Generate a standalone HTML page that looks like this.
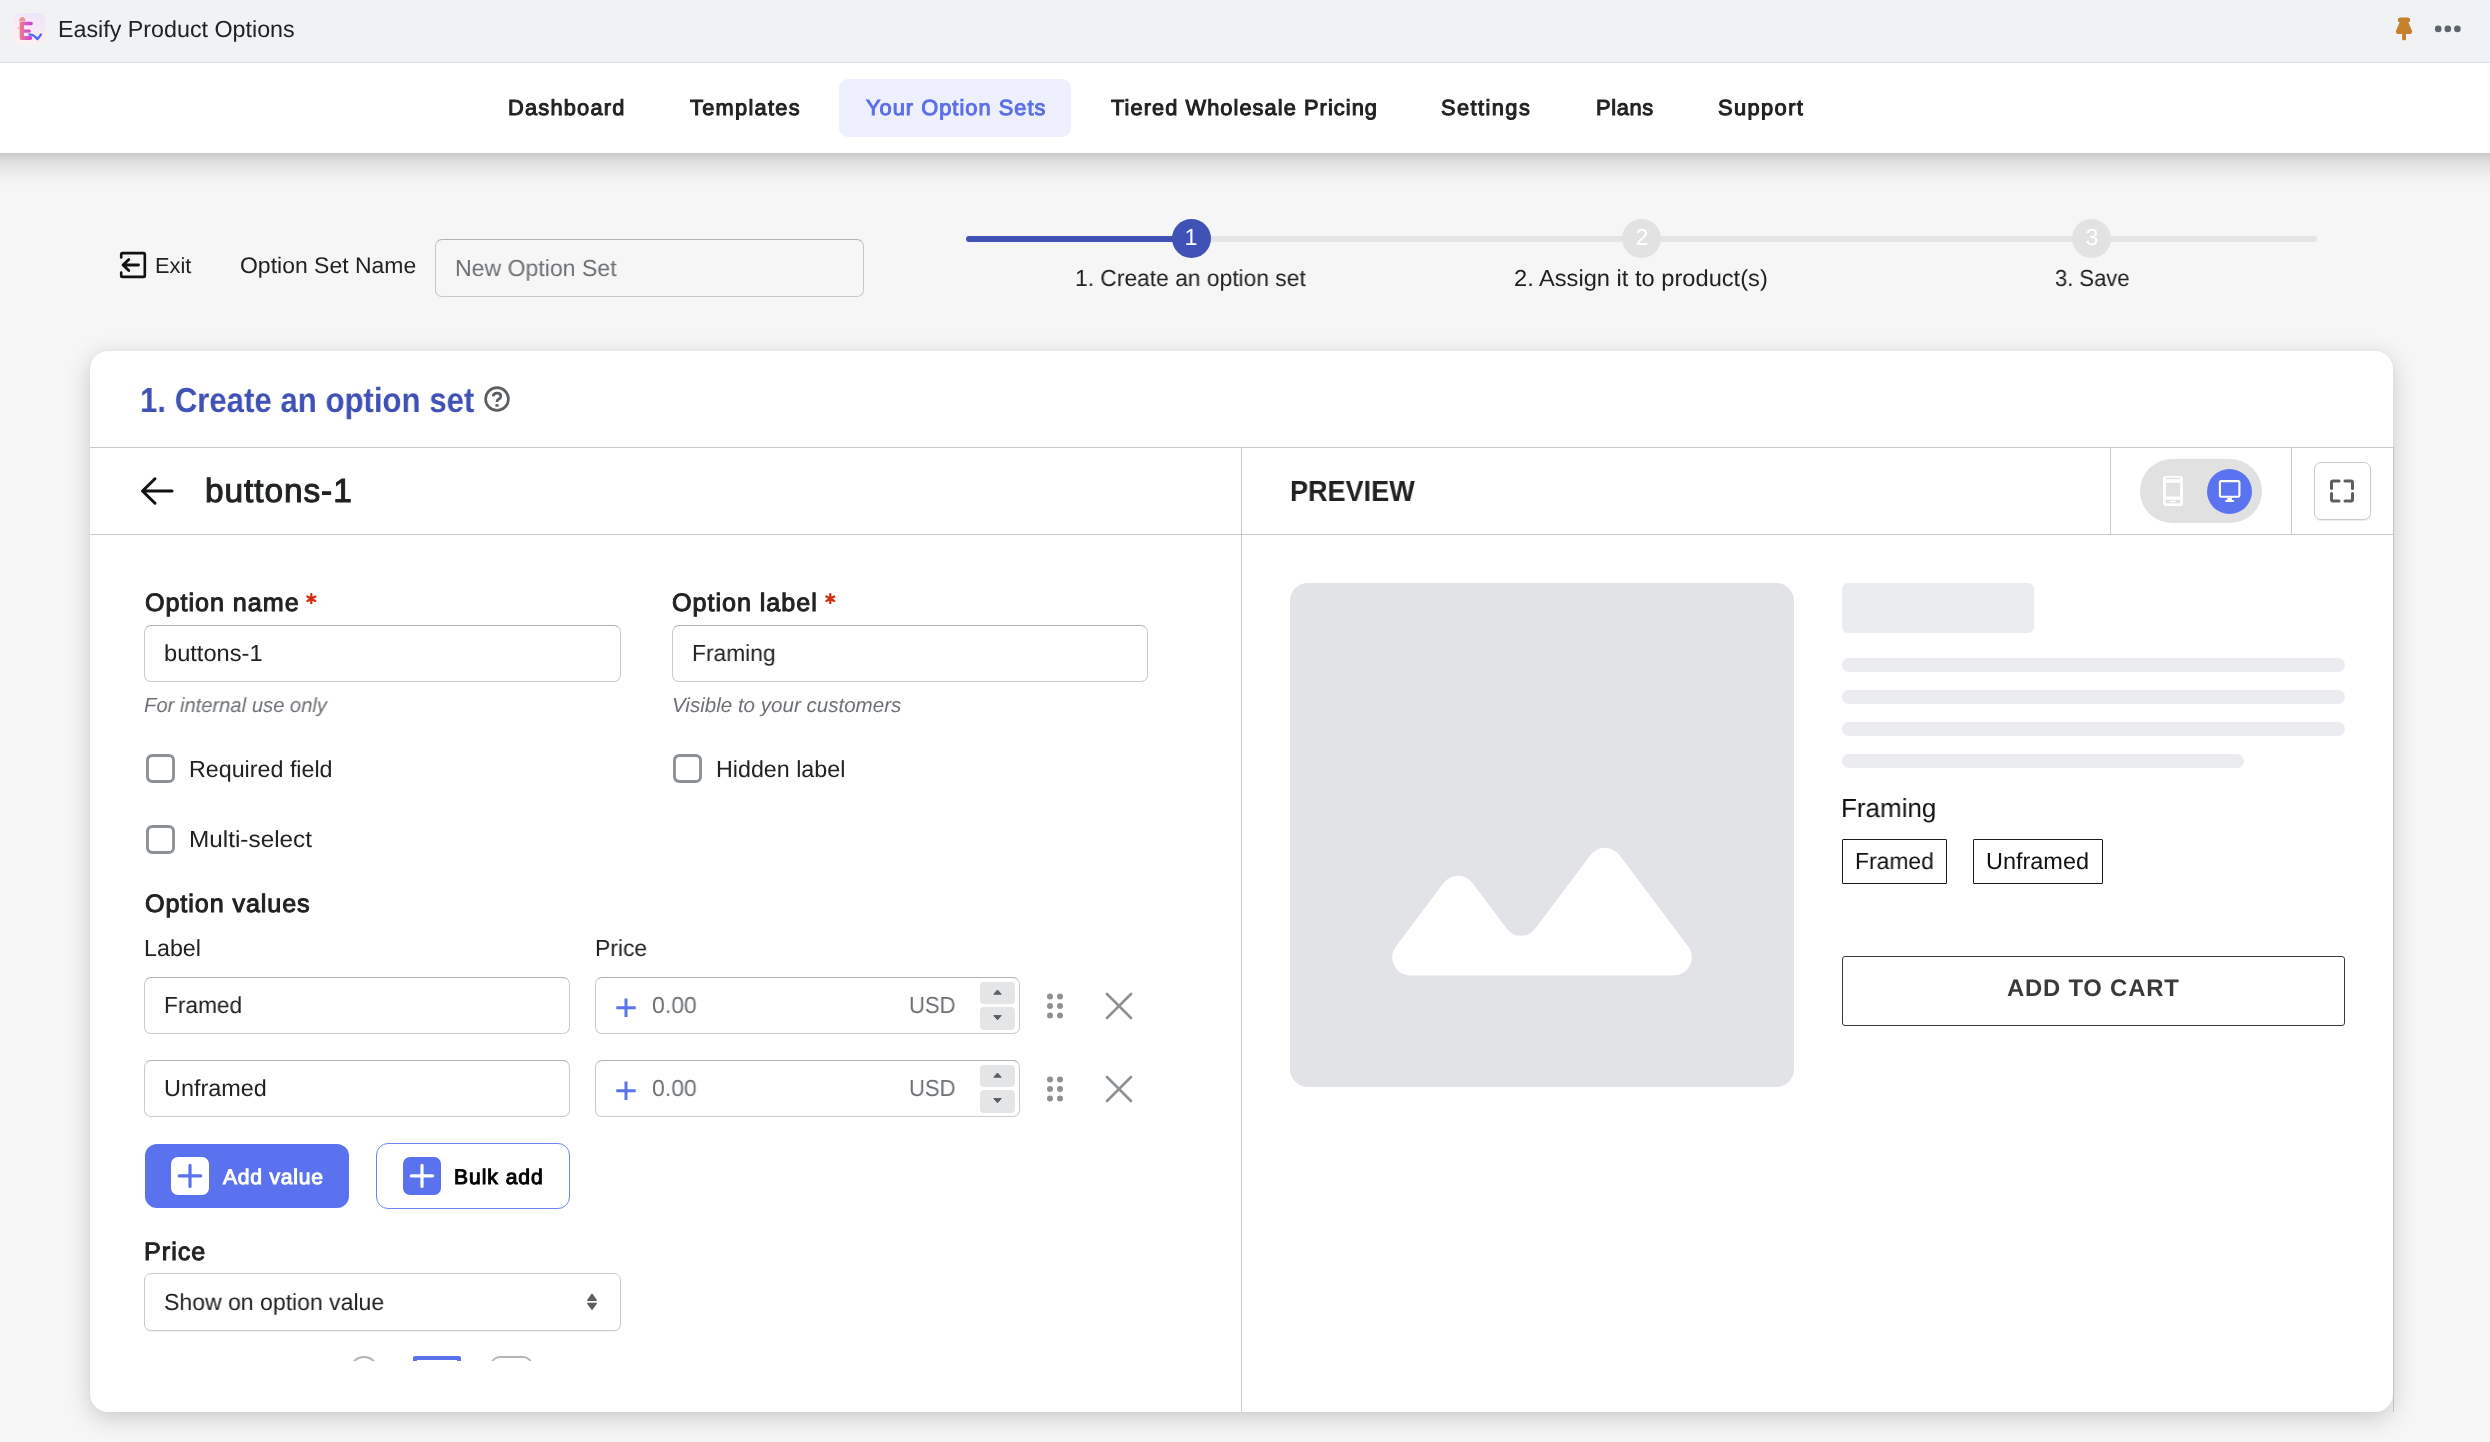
<!DOCTYPE html>
<html>
<head>
<meta charset="utf-8">
<title>Easify Product Options</title>
<style>
html,body{margin:0;padding:0;}
body{width:2490px;height:1442px;overflow:hidden;position:relative;background:#f6f6f6;font-family:"Liberation Sans",sans-serif;}
.a{position:absolute;box-sizing:border-box;}
.t{position:absolute;line-height:1;white-space:nowrap;transform-origin:0 0;font-family:"Liberation Sans",sans-serif;text-rendering:geometricPrecision;will-change:transform;}
svg{position:absolute;overflow:visible;}
.inp{position:absolute;box-sizing:border-box;background:#fff;border:1px solid #c9cccf;border-top-color:#aeb4b9;border-radius:7px;}
.vl{position:absolute;width:1px;background:#cbcbcb;}
.hl{position:absolute;height:1px;background:#cbcbcb;}
</style>
</head>
<body>

<!-- top app bar -->
<div class="a" style="left:0;top:0;width:2490px;height:62px;background:#f1f2f4;"></div>
<div class="a" style="left:0;top:62px;width:2490px;height:1px;background:#dcdee1;"></div>
<!-- logo -->
<div class="a" style="left:13px;top:13px;width:32px;height:32px;border-radius:7px;background:linear-gradient(20deg,#fdf3ee 0%,#fbe9f6 50%,#e7e6fd 100%);"></div>
<svg style="left:13px;top:13px" width="32" height="32" viewBox="0 0 32 32">
 <defs><linearGradient id="eg" x1="0" y1="0" x2="1" y2="0"><stop offset="0" stop-color="#ec7c90"/><stop offset="1" stop-color="#c83be2"/></linearGradient></defs>
 <path d="M8.2 8.7 H18.1 A1.8 1.8 0 0 1 18.1 12.3 H10.9 V16.4 H16.1 A1.7 1.7 0 0 1 16.1 19.8 H10.9 V23.1 H17.3 A1.95 1.95 0 0 1 17.3 27 H8.5 A1.8 1.8 0 0 1 6.7 25.2 V10.2 A1.5 1.5 0 0 1 8.2 8.7Z" fill="url(#eg)"/>
 <path d="M6 8.6 Q6.5 4.2 9.5 4.1 Q12.3 4.3 12.4 8.2Z" fill="#f0939c"/>
 <path d="M4.4 15.2 L6.2 13.8 L6.4 16.5Z" fill="#f3a27a"/>
 <path d="M16.4 21.6 Q20.5 21.2 24.6 26.2 L28 21.5" fill="none" stroke="#4f69f0" stroke-width="2.2" stroke-linecap="round" stroke-linejoin="round"/>
</svg>
<div class="t" style="left:57.67px;top:18.0px;font-size:23.274px;font-weight:400;color:#202223;">Easify Product Options</div>
<!-- pin -->
<svg style="left:2394px;top:16px" width="20" height="26" viewBox="0 0 20 26">
 <path d="M6.3 1.4 H13.9 A2.6 2.6 0 0 1 14.4 6.5 L17.8 14.2 A2.4 2.4 0 0 1 15.8 17.9 H4.2 A2.4 2.4 0 0 1 2.2 14.2 L5.6 6.5 A2.6 2.6 0 0 1 6.3 1.4Z" fill="#c6812e"/>
 <rect x="8.1" y="17" width="3.9" height="7.2" rx="1.2" fill="#c6812e"/>
</svg>
<svg style="left:2430px;top:20px" width="36" height="18" viewBox="0 0 36 18">
 <circle cx="8.2" cy="8.9" r="3.3" fill="#5c6470"/>
 <circle cx="17.8" cy="8.9" r="3.3" fill="#5c6470"/>
 <circle cx="27.4" cy="8.9" r="3.3" fill="#5c6470"/>
</svg>

<!-- nav -->
<div class="a" style="left:0;top:63px;width:2490px;height:90px;background:#fff;"></div>
<div class="a" style="left:0;top:153px;width:2490px;height:34px;background:linear-gradient(to bottom,rgba(0,0,0,0.19) 0%,rgba(0,0,0,0.11) 20%,rgba(0,0,0,0.05) 50%,rgba(0,0,0,0.015) 80%,rgba(0,0,0,0) 100%);"></div>
<div class="a" style="left:839px;top:79px;width:232px;height:58px;border-radius:9px;background:#eef0fd;"></div>
<div class="t" style="left:508.03px;top:97.0px;font-size:21.82px;font-weight:400;color:#202223;letter-spacing:1.204px;-webkit-text-stroke:1px #202223;">Dashboard</div>
<div class="t" style="left:690.11px;top:97.0px;font-size:21.82px;font-weight:400;color:#202223;letter-spacing:1.27px;-webkit-text-stroke:1px #202223;">Templates</div>
<div class="t" style="left:865.64px;top:97.0px;font-size:21.82px;font-weight:400;color:#5b6fe9;letter-spacing:1.017px;-webkit-text-stroke:1px #5b6fe9;">Your Option Sets</div>
<div class="t" style="left:1110.61px;top:97.0px;font-size:21.82px;font-weight:400;color:#202223;letter-spacing:1.058px;-webkit-text-stroke:1px #202223;">Tiered Wholesale Pricing</div>
<div class="t" style="left:1441.48px;top:97.0px;font-size:21.82px;font-weight:400;color:#202223;letter-spacing:1.428px;-webkit-text-stroke:1px #202223;">Settings</div>
<div class="t" style="left:1596.03px;top:97.0px;font-size:21.82px;font-weight:400;color:#202223;letter-spacing:0.626px;-webkit-text-stroke:1px #202223;">Plans</div>
<div class="t" style="left:1718.48px;top:97.0px;font-size:21.82px;font-weight:400;color:#202223;letter-spacing:1.415px;-webkit-text-stroke:1px #202223;">Support</div>

<!-- header row -->
<svg style="left:118px;top:250px" width="30" height="30" viewBox="0 0 30 30">
 <path d="M3.2 7.5 V4.3 A1.2 1.2 0 0 1 4.4 3.1 H25.6 A1.2 1.2 0 0 1 26.8 4.3 V25.7 A1.2 1.2 0 0 1 25.6 26.9 H4.4 A1.2 1.2 0 0 1 3.2 25.7 V22.5" fill="none" stroke="#111" stroke-width="2.6" stroke-linecap="round" stroke-linejoin="round"/>
 <path d="M20.5 15 H5.2 M10.8 9.4 L5 15 L10.8 20.6" fill="none" stroke="#111" stroke-width="2.8" stroke-linecap="round" stroke-linejoin="round"/>
</svg>
<div class="t" style="left:154.73px;top:255.0px;font-size:21.82px;font-weight:400;color:#202223;">Exit</div>
<div class="t" style="left:239.57px;top:255.0px;font-size:22.547px;font-weight:400;color:#202223;transform:scaleX(1.0196);">Option Set Name</div>
<div class="a" style="left:435px;top:239px;width:429px;height:58px;border:1px solid #c4c8cc;border-top-color:#aeb4b9;border-radius:7px;"></div>
<div class="t" style="left:454.68px;top:257.0px;font-size:23.274px;font-weight:400;color:#6d7175;transform:scaleX(0.9917);">New Option Set</div>

<!-- stepper -->
<div class="a" style="left:966px;top:236px;width:1351px;height:6px;border-radius:3px;background:#e3e4e6;"></div>
<div class="a" style="left:966px;top:236px;width:240px;height:6px;border-radius:3px;background:#4152b6;"></div>
<div class="a" style="left:1171.7px;top:218.7px;width:39px;height:39px;border-radius:50%;background:#4152b6;"></div>
<div class="a" style="left:1622.1px;top:218.7px;width:39px;height:39px;border-radius:50%;background:#e2e2e2;"></div>
<div class="a" style="left:2072.1px;top:218.7px;width:39px;height:39px;border-radius:50%;background:#e2e2e2;"></div>
<div class="t" style="left:1191.2px;top:226.3px;font-size:23.2px;color:#fff;transform:translateX(-50%);">1</div>
<div class="t" style="left:1641.6px;top:226.3px;font-size:23.2px;color:#fff;transform:translateX(-50%);">2</div>
<div class="t" style="left:2091.6px;top:226.3px;font-size:23.2px;color:#fff;transform:translateX(-50%);">3</div>
<div class="t" style="left:1075.27px;top:267.0px;font-size:23.274px;font-weight:400;color:#202223;transform:scaleX(0.9802);">1. Create an option set</div>
<div class="t" style="left:1514.44px;top:267.0px;font-size:23.129px;font-weight:400;color:#202223;transform:scaleX(1.0237);">2. Assign it to product(s)</div>
<div class="t" style="left:2055.06px;top:267.0px;font-size:23.274px;font-weight:400;color:#202223;transform:scaleX(0.944);">3. Save</div>

<!-- card -->
<div class="a" style="left:90px;top:351px;width:2303px;height:1061px;border-radius:18px;background:#fff;box-shadow:0 6px 24px rgba(0,0,0,0.18),0 0 3px rgba(0,0,0,0.04);"></div>
<div class="hl" style="left:90px;top:447px;width:2303px;"></div>
<div class="hl" style="left:90px;top:534px;width:2303px;"></div>
<div class="vl" style="left:1241px;top:447px;height:965px;"></div>
<div class="vl" style="left:2110px;top:447px;height:88px;"></div>
<div class="vl" style="left:2291px;top:447px;height:88px;"></div>
<div class="vl" style="left:2393px;top:447px;height:965px;background:#c2c2c2;"></div>
<div class="t" style="left:139.94px;top:384.0px;font-size:34.766px;font-weight:700;color:#3f51b5;transform:scaleX(0.8971);">1. Create an option set</div>
<svg style="left:484px;top:386px" width="26" height="26" viewBox="0 0 26 26">
 <circle cx="13" cy="13" r="11.4" fill="none" stroke="#5c5f62" stroke-width="2.7"/>
 <path d="M9.2 10.4 Q9.4 7.1 13 7.1 Q16.8 7.1 16.8 10.2 Q16.8 12.2 14.6 13.3 Q13 14.1 13 15.9" fill="none" stroke="#5c5f62" stroke-width="2.7" stroke-linecap="butt"/>
 <rect x="11.4" y="18.1" width="3.2" height="2.6" fill="#5c5f62"/>
</svg>

<!-- left header -->
<svg style="left:139px;top:476px" width="36" height="30" viewBox="0 0 36 30">
 <path d="M33 15 H3.5 M16 2.8 L3.5 15 L16 27.2" fill="none" stroke="#111" stroke-width="3" stroke-linecap="round" stroke-linejoin="round"/>
</svg>
<div class="t" style="left:205.33px;top:475.0px;font-size:33.457px;font-weight:400;color:#202223;letter-spacing:0.915px;-webkit-text-stroke:1px #202223;">buttons-1</div>

<!-- preview header -->
<div class="t" style="left:1290.07px;top:478.0px;font-size:29.238px;font-weight:700;color:#202223;transform:scaleX(0.9252);">PREVIEW</div>
<div class="a" style="left:2140px;top:459px;width:122px;height:64px;border-radius:32px;background:#e1e1e1;"></div>
<svg style="left:2163px;top:476px" width="20" height="30" viewBox="0 0 20 30">
 <rect x="0" y="0" width="20" height="30" rx="3" fill="#fff"/>
 <rect x="2.8" y="1.7" width="14.3" height="1.5" fill="#e1e1e1"/>
 <rect x="2.8" y="6.8" width="14.3" height="13.7" fill="#e1e1e1"/>
 <rect x="2.8" y="23.7" width="14.3" height="3.6" fill="#e1e1e1"/>
 <rect x="6.8" y="24.8" width="6.1" height="1.3" fill="#fff"/>
</svg>
<div class="a" style="left:2206.8px;top:468.9px;width:45.4px;height:45.4px;border-radius:50%;background:#5a73ee;"></div>
<svg style="left:2216px;top:478px" width="28" height="28" viewBox="0 0 28 28">
 <rect x="3.9" y="3.1" width="19.5" height="15.7" rx="1.3" fill="none" stroke="#fff" stroke-width="2.1"/>
 <rect x="11.3" y="19.5" width="4.6" height="3" fill="#fff"/>
 <rect x="9.3" y="22" width="8.8" height="2.1" rx="0.6" fill="#fff"/>
</svg>
<div class="a" style="left:2314px;top:462px;width:57px;height:58px;border-radius:7px;border:1px solid #c9cccf;box-shadow:0 1px 1px rgba(0,0,0,0.08);background:#fff;"></div>
<svg style="left:2328px;top:477px" width="28" height="28" viewBox="0 0 28 28">
 <path d="M3.5 11.5 V5.5 A1.5 1.5 0 0 1 5 4 H11 M17 4 H23 A1.5 1.5 0 0 1 24.5 5.5 V11.5 M24.5 16.5 V22.5 A1.5 1.5 0 0 1 23 24 H17 M11 24 H5 A1.5 1.5 0 0 1 3.5 22.5 V16.5" fill="none" stroke="#5c5f62" stroke-width="3" stroke-linecap="round" stroke-linejoin="round"/>
</svg>

<!-- form -->
<div class="t" style="left:144.81px;top:591.0px;font-size:25.15px;font-weight:400;color:#202223;letter-spacing:0.973px;-webkit-text-stroke:1px #202223;">Option name</div>
<svg style="left:305px;top:592px" width="14" height="14" viewBox="0 0 14 14">
 <path d="M6.3 2.2 V11.2 M2.4 4.5 L10.2 8.9 M10.2 4.5 L2.4 8.9" fill="none" stroke="#d72c0d" stroke-width="2.3" stroke-linecap="round"/>
</svg>
<div class="t" style="left:672.31px;top:591.0px;font-size:25.15px;font-weight:400;color:#202223;letter-spacing:0.96px;-webkit-text-stroke:1px #202223;">Option label</div>
<svg style="left:824px;top:592px" width="14" height="14" viewBox="0 0 14 14">
 <path d="M6.3 2.2 V11.2 M2.4 4.5 L10.2 8.9 M10.2 4.5 L2.4 8.9" fill="none" stroke="#d72c0d" stroke-width="2.3" stroke-linecap="round"/>
</svg>
<div class="inp" style="left:144px;top:625px;width:477px;height:57px;"></div>
<div class="inp" style="left:672px;top:625px;width:476px;height:57px;"></div>
<div class="t" style="left:164.4px;top:642.0px;font-size:23.274px;font-weight:400;color:#202223;transform:scaleX(1.0159);">buttons-1</div>
<div class="t" style="left:691.71px;top:642.0px;font-size:23.274px;font-weight:400;color:#202223;transform:scaleX(0.9783);">Framing</div>
<div class="t" style="left:144.29px;top:696.0px;font-size:20.365px;font-weight:400;font-style:italic;color:#6d7175;transform:scaleX(0.9916);">For internal use only</div>
<div class="t" style="left:672.15px;top:696.0px;font-size:20.365px;font-weight:400;font-style:italic;color:#6d7175;transform:scaleX(1.0099);">Visible to your customers</div>

<svg style="left:146px;top:754px" width="29" height="29" viewBox="0 0 29 29"><rect x="1.45" y="1.45" width="26.1" height="26.1" rx="4.8" fill="#fff" stroke="#8c9196" stroke-width="2.9"/></svg>
<svg style="left:673px;top:754px" width="29" height="29" viewBox="0 0 29 29"><rect x="1.45" y="1.45" width="26.1" height="26.1" rx="4.8" fill="#fff" stroke="#8c9196" stroke-width="2.9"/></svg>
<svg style="left:146px;top:825px" width="29" height="29" viewBox="0 0 29 29"><rect x="1.45" y="1.45" width="26.1" height="26.1" rx="4.8" fill="#fff" stroke="#8c9196" stroke-width="2.9"/></svg>
<div class="t" style="left:188.67px;top:758.0px;font-size:23.274px;font-weight:400;color:#202223;">Required field</div>
<div class="t" style="left:716.17px;top:758.0px;font-size:23.27px;font-weight:400;color:#202223;transform:scaleX(0.9979);">Hidden label</div>
<div class="t" style="left:188.58px;top:828.0px;font-size:23.274px;font-weight:400;color:#202223;transform:scaleX(1.0457);">Multi-select</div>

<div class="t" style="left:144.81px;top:892.0px;font-size:25.15px;font-weight:400;color:#202223;letter-spacing:0.909px;-webkit-text-stroke:1px #202223;">Option values</div>
<div class="t" style="left:143.98px;top:937.0px;font-size:23.27px;font-weight:400;color:#202223;transform:scaleX(0.994);">Label</div>
<div class="t" style="left:594.7px;top:937.0px;font-size:23.274px;font-weight:400;color:#202223;transform:scaleX(0.9844);">Price</div>

<!-- row 1 -->
<div class="inp" style="left:144px;top:977px;width:426px;height:57px;"></div>
<div class="inp" style="left:595px;top:977px;width:425px;height:57px;"></div>
<div class="t" style="left:164.32px;top:994.0px;font-size:23.27px;font-weight:400;color:#202223;transform:scaleX(0.974);">Framed</div>
<svg style="left:614px;top:996px" width="24" height="24" viewBox="0 0 24 24"><path d="M12 2.5 V21 M2.3 11.8 H21.7" stroke="#5a73ee" stroke-width="3" fill="none"/></svg>
<div class="t" style="left:652.16px;top:994.0px;font-size:23.274px;font-weight:400;color:#6d7175;transform:scaleX(0.9883);">0.00</div>
<div class="t" style="left:909.32px;top:994.0px;font-size:23.274px;font-weight:400;color:#6d7175;transform:scaleX(0.9488);">USD</div>
<div class="a" style="left:980px;top:982px;width:35px;height:22px;border-radius:4px;background:#e4e5e7;"></div>
<div class="a" style="left:980px;top:1007px;width:35px;height:23px;border-radius:4px;background:#e4e5e7;"></div>
<svg style="left:980px;top:982px" width="35" height="48" viewBox="0 0 35 48"><path d="M13.8 12.2 L17.5 8 L21.2 12.2Z M13.8 33.6 L17.5 37.8 L21.2 33.6Z" fill="#5c5f62" stroke="#5c5f62" stroke-width="1" stroke-linejoin="round"/></svg>
<svg style="left:1040px;top:986px" width="30" height="40" viewBox="0 0 30 40">
 <circle cx="10" cy="10.5" r="3" fill="#8c9196"/><circle cx="20" cy="10.5" r="3" fill="#8c9196"/>
 <circle cx="10" cy="20" r="3" fill="#8c9196"/><circle cx="20" cy="20" r="3" fill="#8c9196"/>
 <circle cx="10" cy="29.5" r="3" fill="#8c9196"/><circle cx="20" cy="29.5" r="3" fill="#8c9196"/>
</svg>
<svg style="left:1102px;top:989px" width="34" height="34" viewBox="0 0 34 34"><path d="M5 5 L29 29 M29 5 L5 29" stroke="#8c9196" stroke-width="2.6" stroke-linecap="round"/></svg>

<!-- row 2 -->
<div class="inp" style="left:144px;top:1060px;width:426px;height:57px;"></div>
<div class="inp" style="left:595px;top:1060px;width:425px;height:57px;"></div>
<div class="t" style="left:164.22px;top:1077.0px;font-size:23.274px;font-weight:400;color:#202223;transform:scaleX(1.0073);">Unframed</div>
<svg style="left:614px;top:1079px" width="24" height="24" viewBox="0 0 24 24"><path d="M12 2.5 V21 M2.3 11.8 H21.7" stroke="#5a73ee" stroke-width="3" fill="none"/></svg>
<div class="t" style="left:652.16px;top:1077.0px;font-size:23.274px;font-weight:400;color:#6d7175;transform:scaleX(0.9883);">0.00</div>
<div class="t" style="left:909.32px;top:1077.0px;font-size:23.274px;font-weight:400;color:#6d7175;transform:scaleX(0.9488);">USD</div>
<div class="a" style="left:980px;top:1065px;width:35px;height:22px;border-radius:4px;background:#e4e5e7;"></div>
<div class="a" style="left:980px;top:1090px;width:35px;height:23px;border-radius:4px;background:#e4e5e7;"></div>
<svg style="left:980px;top:1065px" width="35" height="48" viewBox="0 0 35 48"><path d="M13.8 12.2 L17.5 8 L21.2 12.2Z M13.8 33.6 L17.5 37.8 L21.2 33.6Z" fill="#5c5f62" stroke="#5c5f62" stroke-width="1" stroke-linejoin="round"/></svg>
<svg style="left:1040px;top:1069px" width="30" height="40" viewBox="0 0 30 40">
 <circle cx="10" cy="10.5" r="3" fill="#8c9196"/><circle cx="20" cy="10.5" r="3" fill="#8c9196"/>
 <circle cx="10" cy="20" r="3" fill="#8c9196"/><circle cx="20" cy="20" r="3" fill="#8c9196"/>
 <circle cx="10" cy="29.5" r="3" fill="#8c9196"/><circle cx="20" cy="29.5" r="3" fill="#8c9196"/>
</svg>
<svg style="left:1102px;top:1072px" width="34" height="34" viewBox="0 0 34 34"><path d="M5 5 L29 29 M29 5 L5 29" stroke="#8c9196" stroke-width="2.6" stroke-linecap="round"/></svg>

<!-- buttons -->
<div class="a" style="left:145px;top:1143.5px;width:204px;height:64.5px;border-radius:12px;background:#5a72ee;"></div>
<div class="a" style="left:171px;top:1157px;width:38px;height:38px;border-radius:7px;background:#fff;"></div>
<svg style="left:171px;top:1157px" width="38" height="38" viewBox="0 0 38 38"><path d="M19 8.3 V29.5 M8.3 18.9 H29.7" stroke="#5a72ee" stroke-width="3.2" stroke-linecap="round"/></svg>
<div class="t" style="left:223.31px;top:1167.0px;font-size:21.092px;font-weight:400;color:#ffffff;letter-spacing:0.788px;-webkit-text-stroke:1px #ffffff;">Add value</div>
<div class="a" style="left:376px;top:1143px;width:193.5px;height:65.5px;border-radius:12px;border:1.5px solid #6c84f2;background:#fff;"></div>
<div class="a" style="left:403px;top:1157px;width:38px;height:38px;border-radius:7px;background:#5a72ee;"></div>
<svg style="left:403px;top:1157px" width="38" height="38" viewBox="0 0 38 38"><path d="M19 8.3 V29.5 M8.3 18.9 H29.7" stroke="#fff" stroke-width="3.2" stroke-linecap="round"/></svg>
<div class="t" style="left:454.04px;top:1167.0px;font-size:21.092px;font-weight:400;color:#000000;letter-spacing:0.962px;-webkit-text-stroke:1px #000000;">Bulk add</div>

<div class="t" style="left:144.44px;top:1240.0px;font-size:25.15px;font-weight:400;color:#202223;letter-spacing:1.008px;-webkit-text-stroke:1px #202223;">Price</div>
<div class="inp" style="left:144px;top:1273px;width:477px;height:57.5px;border-color:#c9cccf;box-shadow:0 1px 1px rgba(0,0,0,0.06);"></div>
<div class="t" style="left:163.85px;top:1291.0px;font-size:23.274px;font-weight:400;color:#202223;transform:scaleX(0.9896);">Show on option value</div>
<svg style="left:582px;top:1290px" width="20" height="24" viewBox="0 0 20 24"><path d="M5.6 10.3 L10 4.2 L14.4 10.3Z M5.6 13.3 L10 19.4 L14.4 13.3Z" fill="#5c5f62" stroke="#5c5f62" stroke-width="1.2" stroke-linejoin="round"/></svg>

<!-- cut-off elements at bottom of left scroll area -->
<div class="a" style="left:140px;top:1340px;width:1090px;height:21px;overflow:hidden;">
 <div class="a" style="left:209px;top:16px;width:30px;height:30px;border-radius:50%;border:2px solid #b0b6ba;"></div>
 <div class="a" style="left:273px;top:16px;width:48px;height:48px;border:4px solid #5a72ee;border-radius:2px;"></div>
 <div class="a" style="left:350px;top:16px;width:43px;height:43px;border:2px solid #b0b6ba;border-radius:10px;"></div>
</div>

<!-- preview body -->
<div class="a" style="left:1290px;top:583px;width:504px;height:504px;border-radius:18px;background:#e2e3e6;"></div>
<svg style="left:0;top:0" width="2490" height="1442" viewBox="0 0 2490 1442">
 <path d="M1410.35 975.4 A18 18 0 0 1 1395.95 946.6 L1443.6 883.0 A18 18 0 0 1 1472.4 883.0 L1506.6 928.6 A18 18 0 0 0 1535.4 928.6 L1590.6 855.0 A18 18 0 0 1 1619.4 855.0 L1688.1 946.6 A18 18 0 0 1 1673.7 975.4 Z" fill="#fff"/>
</svg>
<div class="a" style="left:1842px;top:583px;width:192px;height:50px;border-radius:6px;background:#ebecef;"></div>
<div class="a" style="left:1842px;top:657.5px;width:503px;height:14px;border-radius:7px;background:#ebecef;"></div>
<div class="a" style="left:1842px;top:689.5px;width:503px;height:14px;border-radius:7px;background:#ebecef;"></div>
<div class="a" style="left:1842px;top:721.5px;width:503px;height:14px;border-radius:7px;background:#ebecef;"></div>
<div class="a" style="left:1842px;top:753.5px;width:402px;height:14px;border-radius:7px;background:#ebecef;"></div>
<div class="t" style="left:1840.69px;top:795.0px;font-size:26.329px;font-weight:400;color:#121212;transform:scaleX(0.9883);">Framing</div>
<div class="a" style="left:1842px;top:839px;width:105px;height:45px;border:1.3px solid #1a1a1a;border-radius:1px;"></div>
<div class="a" style="left:1973px;top:839px;width:130px;height:45px;border:1.3px solid #1a1a1a;border-radius:1px;"></div>
<div class="t" style="left:1854.8px;top:850.0px;font-size:23.274px;font-weight:400;color:#121212;transform:scaleX(0.9831);">Framed</div>
<div class="t" style="left:1986.42px;top:850.0px;font-size:23.274px;font-weight:400;color:#121212;transform:scaleX(1.0084);">Unframed</div>
<div class="a" style="left:1842px;top:956px;width:503px;height:70px;border:1.3px solid #3a3a3a;border-radius:3px;"></div>
<div class="t" style="left:2006.54px;top:977.0px;font-size:23.856px;font-weight:700;color:#3a3a3a;letter-spacing:0.79px;">ADD TO CART</div>

</body>
</html>
